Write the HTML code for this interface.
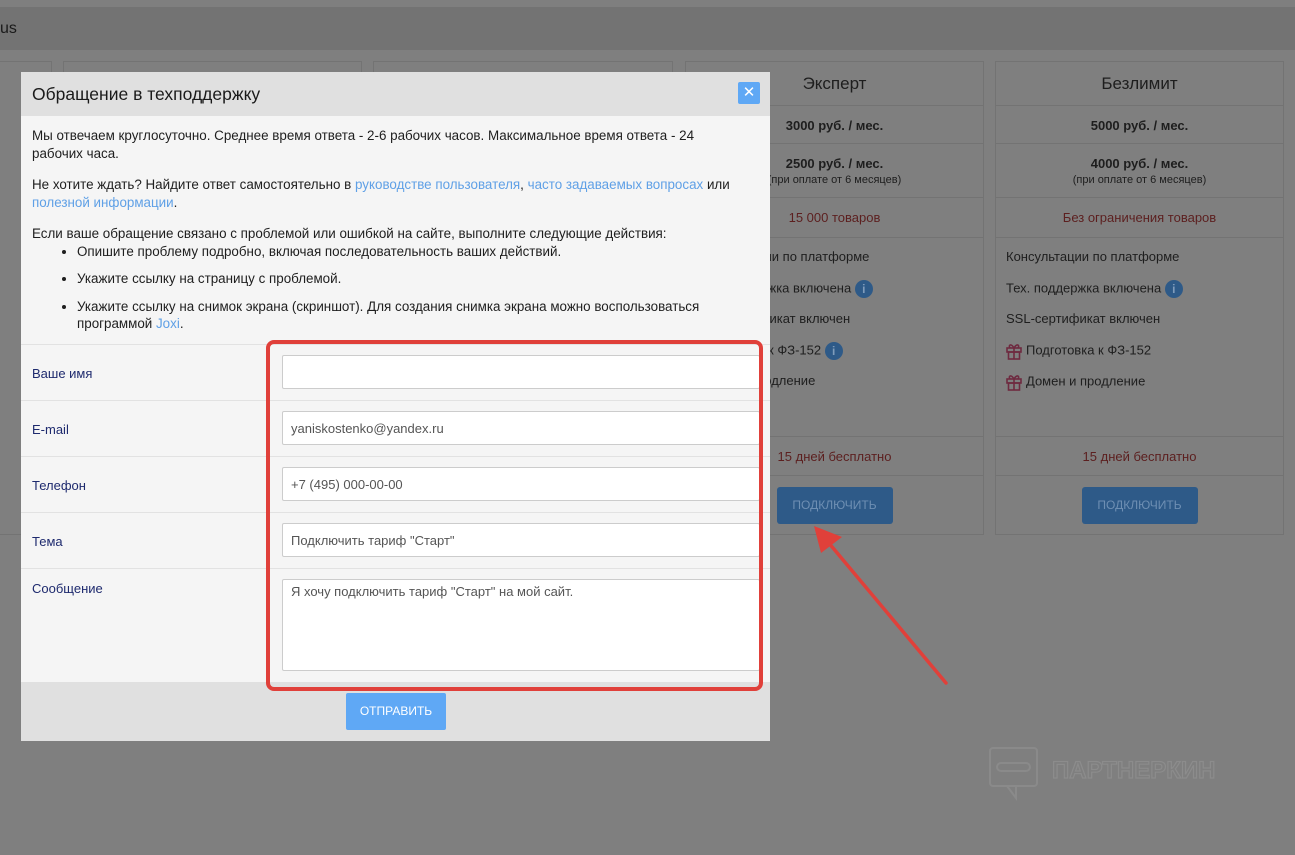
<!DOCTYPE html>
<html style="background:#7f7f7f"><head><meta charset="utf-8"><style>
*{box-sizing:border-box;margin:0;padding:0}
html,body{background:#7f7f7f}
body{width:1295px;height:855px;font-family:"Liberation Sans",sans-serif;position:relative;overflow:hidden;color:#222}
.bg{position:absolute;left:0;top:0;width:1295px;height:855px;background:#7f7f7f}
.topbar{position:absolute;left:0;top:7px;width:1295px;height:43px;background:#737373;font-size:16px;color:#1a1a1a;padding:13px 0 0 0}
.card{position:absolute;top:61px;height:474px;border:1px solid #737373;background:#7f7f7f;font-size:13px;color:#1e1e1e;text-align:center}
.card .r{border-bottom:1px solid #737373;position:relative}
.t{height:44px;font-size:17px;padding-top:12px}
.p1{height:38px;font-weight:bold;padding-top:12px}
.p2{height:54px;font-weight:bold;padding-top:12px;line-height:16px}
.p2 small{font-weight:normal;font-size:11px;display:block}
.g{height:40px;color:#5c1f1f;padding-top:12px}
.f{height:199px;text-align:left;padding:11px 0 0 10px}
.f div{height:31px}
.fr{height:39px;color:#5c1f1f;padding-top:12px}
.btn{display:inline-block;margin-top:11px;width:116px;height:37px;background:#2e5a88;color:#6e8fb3;border-radius:3px;font-size:12px;line-height:37px}
.i{display:inline-block;width:18px;height:18px;border-radius:50%;background:#2e5a88;color:#7f9cbb;font-size:12px;font-weight:bold;text-align:center;line-height:18px;vertical-align:middle}
.modal{position:absolute;left:21px;top:72px;width:749px;height:669px;background:#f5f5f5}
.mh{height:44px;background:#e0e0e0;font-size:17.5px;padding:12px 11px;position:relative;color:#1a1a1a}
.x{position:absolute;right:10px;top:10px;width:22px;height:22px;background:#5fa8f5;color:#fff;border-radius:2px;text-align:center;line-height:22px;font-size:15px}
.mb{padding:11px 40px 0 11px;font-size:13.4px;line-height:17.5px;color:#1e1e1e}
.mb p{margin-bottom:14px}
a{color:#5fa0e6;text-decoration:none}
ul{margin:0 0 0 45px;list-style:disc}
li{margin-bottom:10px;padding-left:0}
.row{position:absolute;left:0;width:749px;border-top:1px solid #e2e2e2;font-size:13px;color:#1e2a6e}
.row span{position:absolute;left:11px}
.inp{position:absolute;left:261px;width:478px;height:34px;background:#fff;border:1px solid #ccc;border-radius:2px;font-size:13px;color:#555;padding:9px 8px}
.foot{position:absolute;left:0;top:610px;width:749px;height:59px;background:#e0e0e0}
.send{position:absolute;left:325px;top:11px;width:100px;height:37px;background:#5fa8f5;color:#fff;font-size:12px;text-align:center;line-height:37px;border-radius:2px}
.red{position:absolute;left:266px;top:340px;width:497px;height:351px;border:4px solid #e0403a;border-radius:8px}
.gift{display:inline-block;vertical-align:middle;margin-right:4px}
</style></head><body>
<div class="bg"></div>
<div class="topbar">us</div>
<div class="card" style="left:-10px;width:62px"></div>
<div class="card" style="left:63px;width:299px"></div>
<div class="card" style="left:373px;width:300px"></div>
<div class="card" style="left:685px;width:299px">
<div class="r t">Эксперт</div><div class="r p1">3000 руб. / мес.</div>
<div class="r p2">2500 руб. / мес.<small>(при оплате от 6 месяцев)</small></div>
<div class="r g">15 000 товаров</div>
<div class="r f"><div>Консультации по платформе</div><div>Тех. поддержка включена <span class="i">i</span></div><div>SSL-сертификат включен</div><div>Подготовка к ФЗ-152 <span class="i">i</span></div><div>Домен и продление</div></div>
<div class="r fr">15 дней бесплатно</div><div><span class="btn">ПОДКЛЮЧИТЬ</span></div></div>
<div class="card" style="left:995px;width:289px">
<div class="r t">Безлимит</div><div class="r p1">5000 руб. / мес.</div>
<div class="r p2">4000 руб. / мес.<small>(при оплате от 6 месяцев)</small></div>
<div class="r g">Без ограничения товаров</div>
<div class="r f"><div>Консультации по платформе</div><div>Тех. поддержка включена <span class="i">i</span></div><div>SSL-сертификат включен</div>
<div><svg class="gift" width="16" height="18" viewBox="0 0 16 18"><g fill="none" stroke="#6e2a40" stroke-width="1.6"><rect x="1" y="6" width="14" height="4"/><rect x="2.5" y="10" width="11" height="7"/><line x1="8" y1="6" x2="8" y2="17"/><path d="M8 6C5 1 2 3 4 6M8 6C11 1 14 3 12 6"/></g></svg>Подготовка к ФЗ-152</div>
<div><svg class="gift" width="16" height="18" viewBox="0 0 16 18"><g fill="none" stroke="#6e2a40" stroke-width="1.6"><rect x="1" y="6" width="14" height="4"/><rect x="2.5" y="10" width="11" height="7"/><line x1="8" y1="6" x2="8" y2="17"/><path d="M8 6C5 1 2 3 4 6M8 6C11 1 14 3 12 6"/></g></svg>Домен и продление</div></div>
<div class="r fr">15 дней бесплатно</div><div><span class="btn">ПОДКЛЮЧИТЬ</span></div></div>

<svg style="position:absolute;left:985px;top:745px" width="270" height="60"><rect x="5" y="3" width="47" height="38" rx="3" fill="none" stroke="#8a8a8a" stroke-width="2"/><path d="M22 41 L31 53 L31 41" fill="none" stroke="#8a8a8a" stroke-width="2"/><rect x="12" y="18" width="33" height="8" rx="4" fill="none" stroke="#8a8a8a" stroke-width="2"/><text x="67" y="33" font-family="Liberation Sans" font-weight="bold" font-size="24" fill="none" stroke="#8c8c8c" stroke-width="1.2">ПАРТНЕРКИН</text></svg>

<div class="modal">
<div class="mh">Обращение в техподдержку<div class="x">✕</div></div>
<div class="mb">
<p>Мы отвечаем круглосуточно. Среднее время ответа - 2-6 рабочих часов. Максимальное время ответа - 24 рабочих часа.</p>
<p>Не хотите ждать? Найдите ответ самостоятельно в <a>руководстве пользователя</a>, <a>часто задаваемых вопросах</a> или <a>полезной информации</a>.</p>
<p style="margin-bottom:0">Если ваше обращение связано с проблемой или ошибкой на сайте, выполните следующие действия:</p>
<ul><li>Опишите проблему подробно, включая последовательность ваших действий.</li><li>Укажите ссылку на страницу с проблемой.</li><li>Укажите ссылку на снимок экрана (скриншот). Для создания снимка экрана можно воспользоваться программой <a>Joxi</a>.</li></ul>
</div>
<div class="row" style="top:272px;height:56px"><span style="top:21px">Ваше имя</span></div>
<div class="row" style="top:328px;height:56px"><span style="top:21px">E-mail</span></div>
<div class="row" style="top:384px;height:56px"><span style="top:21px">Телефон</span></div>
<div class="row" style="top:440px;height:56px"><span style="top:21px">Тема</span></div>
<div class="row" style="top:496px;height:114px"><span style="top:12px">Сообщение</span></div>
<div class="inp" style="top:283px"></div>
<div class="inp" style="top:339px">yaniskostenko@yandex.ru</div>
<div class="inp" style="top:395px">+7 (495) 000-00-00</div>
<div class="inp" style="top:451px">Подключить тариф "Старт"</div>
<div class="inp" style="top:507px;height:92px;padding-top:4px">Я хочу подключить тариф "Старт" на мой сайт.</div>
<div class="foot"><div class="send">ОТПРАВИТЬ</div></div>
</div>
<div class="red"></div>
<svg style="position:absolute;left:0;top:0" width="1295" height="855"><line x1="946" y1="683" x2="828" y2="542" stroke="#e0403a" stroke-width="3.5" stroke-linecap="round"/><polygon points="814,526 842,537 821,553" fill="#e0403a"/></svg>
</body></html>
